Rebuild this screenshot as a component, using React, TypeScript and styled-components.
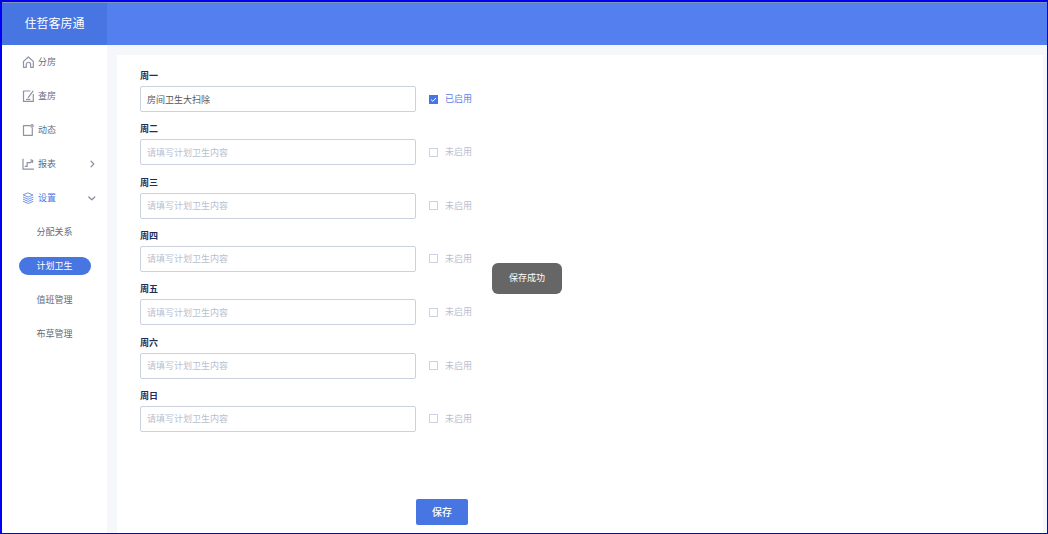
import React, { useState } from 'react';
import styled, { createGlobalStyle, css } from 'styled-components';

const GlobalStyle = createGlobalStyle`
  *, *::before, *::after { box-sizing: border-box; }
  body {
    margin: 0;
    background: #f5f7fb;
    font-family: "Noto Sans", "Noto Sans CJK SC", sans-serif;
    font-size: 9px;
    line-height: 12px;
    color: #666c7c;
  }
  button, input { font: inherit; }
`;

const Frame = styled.div`
  min-height: 100vh;
  display: flex;
  flex-direction: column;
  border: solid #0000f5;
  border-width: 2px 1px 1px 2px;
`;

const Header = styled.header`
  display: flex;
  height: 43px;
  border-top: 1px solid #8095b8;
  background: #5480ef;
`;

const Brand = styled.h1`
  margin: 0;
  width: 105px;
  display: flex;
  align-items: center;
  justify-content: center;
  background: #4775e1;
  color: #fff;
  font-size: 12px;
  line-height: 16px;
  font-weight: 400;
`;

const Body = styled.div`
  flex: 1;
  display: flex;
`;

const Sidebar = styled.nav`
  flex: none;
  width: 105px;
  background: #fff;
`;

const Menu = styled.ul`
  margin: 0;
  padding: 0;
  list-style: none;
`;

const MenuLink = styled.a<{ $active?: boolean }>`
  display: flex;
  align-items: center;
  gap: 4px;
  height: 34px;
  padding: 0 11px 0 20px;
  color: ${(p) => (p.$active ? '#4a76e2' : '#666c7c')};
  text-decoration: none;

  svg { color: #858b9c; }
  svg:first-child { color: ${(p) => (p.$active ? '#7495ea' : '#8d92a5')}; }
`;

const MenuText = styled.span`
  flex: 1;
`;

const SubItem = styled.li`
  height: 34px;
  display: flex;
  align-items: center;
  justify-content: center;
`;

const SubLink = styled.a<{ $active?: boolean }>`
  width: 72px;
  height: 18px;
  border-radius: 9px;
  display: flex;
  align-items: center;
  justify-content: center;
  color: #666c7c;
  text-decoration: none;
  ${(p) =>
    p.$active &&
    css`
      background: #4775e1;
      color: #fff;
    `}
`;

const Main = styled.main`
  flex: 1;
  min-width: 0;
  display: flex;
  padding: 10px 4px 0 10px;
`;

const Panel = styled.form`
  flex: 1;
  min-width: 0;
  display: flex;
  flex-direction: column;
  padding: 15px 23px 8px;
  background: #fff;
`;

const DayList = styled.div`
  flex: 1;
  display: flex;
  flex-direction: column;
  justify-content: space-between;
`;

const Day = styled.div`
  display: flex;
  flex-direction: column;
  gap: 4px;
`;

const DayLabel = styled.label`
  color: #1f2d5a;
  font-weight: 700;
`;

const DayRow = styled.div`
  display: flex;
  align-items: center;
  gap: 13px;
`;

const TextInput = styled.input`
  width: 276px;
  height: 26px;
  padding: 0 6px;
  border: 1px solid #ccd1e0;
  border-radius: 2px;
  background: #fff;
  color: #555;
  outline: none;

  &::placeholder { color: #b9bfd0; opacity: 1; }
  &:focus { border-color: #4775e1; }
`;

const Toggle = styled.label<{ $on: boolean }>`
  display: flex;
  align-items: center;
  gap: 7px;
  color: ${(p) => (p.$on ? '#5c82e8' : '#b9c0d1')};
  cursor: pointer;
`;

const CheckWrap = styled.span`
  position: relative;
  display: flex;

  svg { position: absolute; inset: 0; pointer-events: none; }
`;

const Checkbox = styled.input`
  appearance: none;
  margin: 0;
  width: 9px;
  height: 9px;
  border: 1px solid #ccd3e2;
  background: #fff;

  &:checked { background: #4775e1; border-color: #4775e1; }
`;

const SaveButton = styled.button`
  width: 52px;
  height: 26px;
  margin: 67px 0 0 276px;
  padding: 0;
  border: 0;
  border-radius: 2px;
  background: #4775e1;
  color: #fff;
  font-size: 10px;
  font-weight: 500;
  cursor: pointer;
`;

const Toast = styled.div`
  position: fixed;
  top: 263px;
  left: 492px;
  padding: 9px 17px 10px;
  border-radius: 6px;
  background: #666;
  color: #fff;
`;

const Icon = ({ children, size = 12 }: { children: React.ReactNode; size?: number }) => (
  <svg
    width={size}
    height={size}
    viewBox={`0 0 ${size} ${size}`}
    fill="none"
    stroke="currentColor"
    strokeWidth="1.2"
    strokeLinecap="round"
    strokeLinejoin="round"
    aria-hidden="true"
  >
    {children}
  </svg>
);

const HomeIcon = () => (
  <Icon>
    <path d="M1.5 5.4 6.4 1l4.9 4.4v5.9H8.6V8.4a2.1 2.1 0 0 0-4.3 0v2.9H1.5z" />
  </Icon>
);

const EditIcon = () => (
  <Icon>
    <path d="M7.8 1H1.5v10.4h9.8V4.4M11 1.2 6.4 7.4M4.6 9.4h3.2" />
  </Icon>
);

const FeedIcon = () => (
  <Icon>
    <path d="M7.8 1.6H1.5v9.7h8.8V4.4" />
    <circle cx="10" cy="1.9" r="1.2" />
  </Icon>
);

const ChartIcon = () => (
  <Icon>
    <path d="M1 1.2v10h10.5M3.2 8.4h1.9V4.7h3l2.4-1.7M8.9 1.9l1.9.7-.5 1.9" />
  </Icon>
);

const LayersIcon = () => (
  <Icon>
    <path
      strokeWidth="1"
      d="M6.2 1 11 3 6.2 5.1 1.4 3zM1.4 5.2l4.8 2.1L11 5.2M1.4 7.3l4.8 2.1L11 7.3M1.4 9.4l4.8 2.1L11 9.4"
    />
  </Icon>
);

const ChevronRight = () => (
  <Icon size={8}>
    <path d="M3 1.2 5.8 4 3 6.8" />
  </Icon>
);

const ChevronDown = () => (
  <Icon size={8}>
    <path d="M.8 3 3.8 5.8 6.8 3" />
  </Icon>
);

const subItems = ['分配关系', '计划卫生', '值班管理', '布草管理'];

const initialDays = ['周一', '周二', '周三', '周四', '周五', '周六', '周日'].map((name, i) => ({
  name,
  content: i === 0 ? '房间卫生大扫除' : '',
  enabled: i === 0,
}));

export default function App() {
  const [days, setDays] = useState(initialDays);

  const update = (index: number, change: Partial<(typeof initialDays)[number]>) =>
    setDays((list) => list.map((d, i) => (i === index ? { ...d, ...change } : d)));

  return (
    <>
      <GlobalStyle />
      <Frame>
        <Header>
          <Brand>住哲客房通</Brand>
        </Header>
        <Body>
          <Sidebar>
            <Menu>
              <li><MenuLink href="#rooms"><HomeIcon /><MenuText>分房</MenuText></MenuLink></li>
              <li><MenuLink href="#check"><EditIcon /><MenuText>查房</MenuText></MenuLink></li>
              <li><MenuLink href="#feed"><FeedIcon /><MenuText>动态</MenuText></MenuLink></li>
              <li>
                <MenuLink href="#reports"><ChartIcon /><MenuText>报表</MenuText><ChevronRight /></MenuLink>
              </li>
              <li>
                <MenuLink href="#settings" $active>
                  <LayersIcon /><MenuText>设置</MenuText><ChevronDown />
                </MenuLink>
                <Menu>
                  {subItems.map((text, i) => (
                    <SubItem key={text}>
                      <SubLink href={`#settings-${i + 1}`} $active={i === 1}>{text}</SubLink>
                    </SubItem>
                  ))}
                </Menu>
              </li>
            </Menu>
          </Sidebar>
          <Main>
            <Panel onSubmit={(e) => e.preventDefault()}>
              <DayList>
                {days.map((day, i) => (
                  <Day key={day.name}>
                    <DayLabel htmlFor={`day-${i}`}>{day.name}</DayLabel>
                    <DayRow>
                      <TextInput
                        id={`day-${i}`}
                        type="text"
                        placeholder="请填写计划卫生内容"
                        value={day.content}
                        onChange={(e) => update(i, { content: e.target.value })}
                      />
                      <Toggle $on={day.enabled}>
                        <CheckWrap>
                          <Checkbox
                            type="checkbox"
                            checked={day.enabled}
                            onChange={(e) => update(i, { enabled: e.target.checked })}
                          />
                          {day.enabled && (
                            <svg width="9" height="9" viewBox="0 0 9 9" fill="none" stroke="#fff" aria-hidden="true">
                              <path d="M2 4.6 3.8 6.3 7 3" />
                            </svg>
                          )}
                        </CheckWrap>
                        {day.enabled ? '已启用' : '未启用'}
                      </Toggle>
                    </DayRow>
                  </Day>
                ))}
              </DayList>
              <SaveButton type="submit">保存</SaveButton>
            </Panel>
          </Main>
        </Body>
        <Toast role="status">保存成功</Toast>
      </Frame>
    </>
  );
}
